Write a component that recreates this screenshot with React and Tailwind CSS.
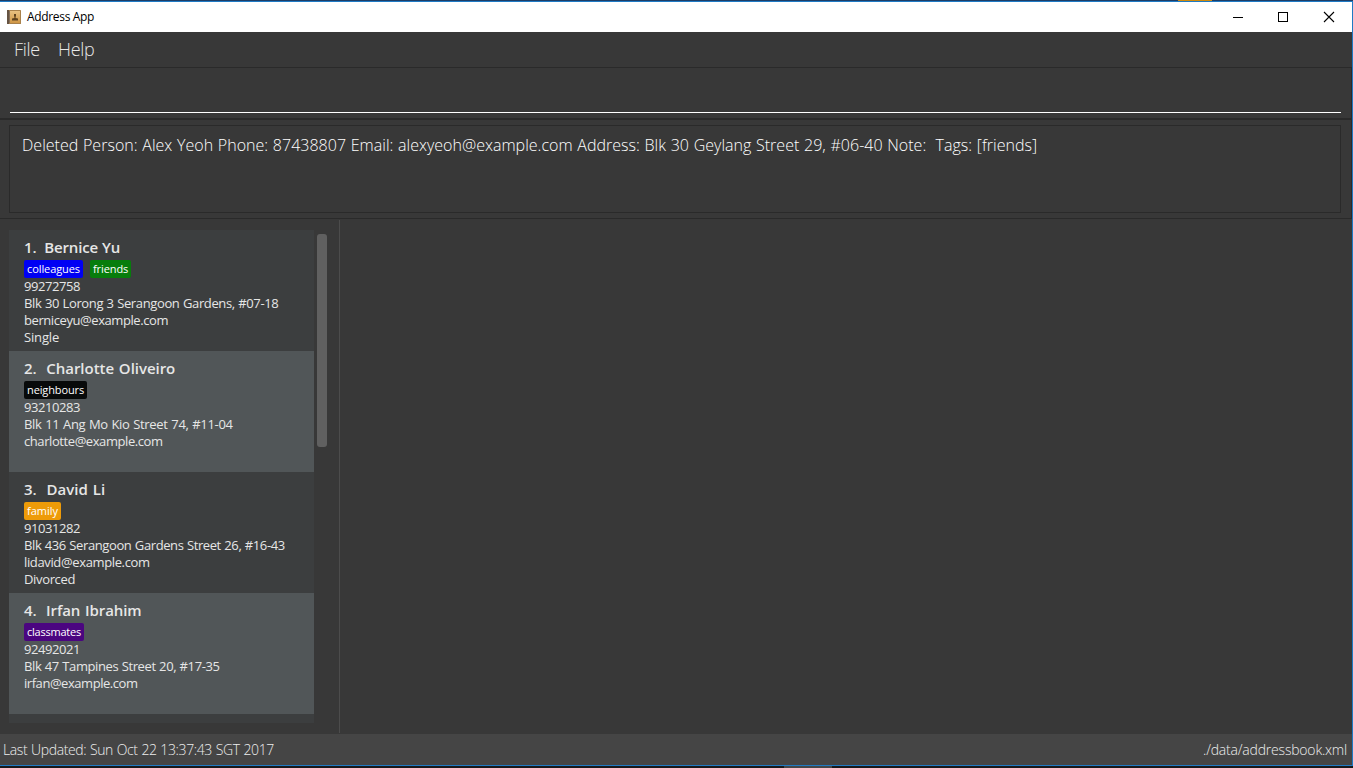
import React from "react";

const people = [
  {
    name: "1.  Bernice Yu",
    nameClass: "tracking-[-0.15px] [word-spacing:0.2px]",
    tags: [
      { label: "colleagues", className: "w-[59px] bg-[#0000f4] tracking-[-0.09px]" },
      { label: "friends", className: "w-[41px] bg-[#077d0c] tracking-[-0.1px]" },
    ],
    lines: [
      ["99272758", "tracking-[-0.43px]"],
      ["Blk 30 Lorong 3 Serangoon Gardens, #07-18", "tracking-[-0.37px] [word-spacing:0.5px]"],
      ["berniceyu@example.com", "tracking-[-0.42px]"],
      ["Single", "tracking-[-0.15px]"],
    ],
  },
  {
    name: "2.  Charlotte Oliveiro",
    nameClass: "tracking-[-0.04px] [word-spacing:1px]",
    tags: [{ label: "neighbours", className: "w-[63px] bg-[#080a0a] tracking-[-0.12px]" }],
    lines: [
      ["93210283", "tracking-[-0.43px]"],
      ["Blk 11 Ang Mo Kio Street 74, #11-04", "tracking-[-0.3px] [word-spacing:0.5px]"],
      ["charlotte@example.com", "tracking-[-0.42px]"],
    ],
  },
  {
    name: "3.  David Li",
    nameClass: "tracking-[0.02px] [word-spacing:1px]",
    tags: [{ label: "family", className: "w-[37px] bg-[#ee9b08] tracking-[0px]" }],
    lines: [
      ["91031282", "tracking-[-0.43px]"],
      ["Blk 436 Serangoon Gardens Street 26, #16-43", "tracking-[-0.4px] [word-spacing:0.5px]"],
      ["lidavid@example.com", "tracking-[-0.36px]"],
      ["Divorced", "tracking-[-0.35px]"],
    ],
  },
  {
    name: "4.  Irfan Ibrahim",
    nameClass: "tracking-[-0.1px] [word-spacing:1px]",
    tags: [{ label: "classmates", className: "w-[60px] bg-[#4b0580] tracking-[-0.23px]" }],
    lines: [
      ["92492021", "tracking-[-0.43px]"],
      ["Blk 47 Tampines Street 20, #17-35", "tracking-[-0.4px] [word-spacing:0.5px]"],
      ["irfan@example.com", "tracking-[-0.45px]"],
    ],
  },
];

function BookIcon() {
  return (
    <svg width="14" height="14" viewBox="0 0 14 14" className="block">
      <defs>
        <linearGradient id="cover" x1="0" y1="0" x2="0" y2="1">
          <stop offset="0" stopColor="#e8c182" />
          <stop offset="1" stopColor="#cf9645" />
        </linearGradient>
      </defs>
      <rect width="14" height="14" rx="0.6" fill="#a9814b" />
      <rect x="3" y="1" width="10" height="12" fill="url(#cover)" />
      <rect width="2" height="14" fill="#665443" />
      <rect x="2" y="1" width="1" height="12" fill="#85705a" />
      <path d="M7 4h2v2l-.4 1v1l2.400.6V10.500H5V8.600L7.400 8V7L7 6z" fill="#60431f" />
    </svg>
  );
}

function TitleBar() {
  return (
    <header className="flex h-[30px] shrink-0 items-center bg-white pl-[7px] text-black">
      <BookIcon />
      <span className="ml-1.5 text-[12px] leading-4 tracking-[-0.33px]">Address App</span>
      <svg className="ml-auto mr-[17px] block" width="102" height="12" viewBox="0 0 102 12" fill="none" stroke="#000" shapeRendering="crispEdges">
        <path d="M0 6.500h10" />
        <rect x="45.500" y="1.500" width="9" height="9" />
        <path d="M91 1l10 10M101 1L91 11" shapeRendering="auto" strokeWidth="1.1" />
      </svg>
    </header>
  );
}

function PersonCard({ person, shaded }) {
  return (
    <li className={`h-[121px] shrink-0 pl-[15px] pt-[7px] text-[#e6e6e6] ${shaded ? "bg-[#515658]" : "bg-[#3c3e3f]"}`}>
      <h2 className={`h-[22px] whitespace-pre text-[15px] font-semibold leading-[20px] ${person.nameClass}`}>{person.name}</h2>
      <div className="mt-[1px] flex h-[18px] gap-[7px]">
        {person.tags.map((tag) => (
          <span key={tag.label} className={`block h-[18px] rounded-[2px] pl-[3px] text-[11px] leading-[18px] text-white ${tag.className}`}>
            {tag.label}
          </span>
        ))}
      </div>
      {person.lines.map(([text, className]) => (
        <p key={text} className={`h-[17px] whitespace-nowrap text-[13px] leading-[17px] ${className}`}>{text}</p>
      ))}
    </li>
  );
}

export default function App() {
  return (
    <div className="flex h-[768px] w-[1353px] flex-col overflow-hidden bg-[#383838] font-['Open_Sans',sans-serif]">
      <div className="flex h-px shrink-0 bg-[#1d3d66] pl-[1178px]">
        <div className="h-px w-[34px] bg-[#d18b0c]" />
      </div>
      <div className="flex h-[765px] shrink-0 flex-col border-b border-r border-t border-[#1f7ac4]">
        <TitleBar />
        <nav className="flex h-[35px] shrink-0 gap-[18px] pl-[14px] text-[18px] font-light leading-[35px] text-[#e8e8e8]">
          <span className="w-[26px] tracking-[-0.3px]">File</span>
          <span className="tracking-[-0.3px]">Help</span>
        </nav>
        <div className="h-[53px] shrink-0 border-b-2 border-r border-t border-[#2a2a2a] pl-[10px] pr-[10px]">
          <div className="h-[45px] border-b border-white" />
        </div>
        <div className="h-[99px] shrink-0 border-b border-r border-[#2a2a2a] pl-[9px] pr-[10px] pt-[5px]">
          <div className="h-[88px] whitespace-pre border border-[#2a2a2a] pl-[12px] pt-[8px] text-[16px] font-light leading-[22px] tracking-[0.02px] [word-spacing:0.5px] text-white">
            {"Deleted Person: Alex Yeoh Phone: 87438807 Email: alexyeoh@example.com Address: Blk 30 Geylang Street 29, #06-40 Note:  Tags: [friends]"}
          </div>
        </div>
        <main className="flex h-[515px] shrink-0 pt-px">
          <aside className="flex w-[339px] shrink-0 pl-[9px] pt-[10px]">
            <ul className="flex h-[493px] w-[305px] flex-col overflow-hidden bg-[#3c3e3f]">
              {people.map((person, i) => (
                <PersonCard key={person.name} person={person} shaded={i % 2 === 1} />
              ))}
            </ul>
            <div className="ml-[3px] mt-[4px] h-[213px] w-[10px] rounded-[3px] bg-[#606060]" />
          </aside>
          <div className="h-[513px] w-px bg-[#4c4c4c]" />
        </main>
        <footer className="flex h-[31px] shrink-0 justify-between bg-[#454545] pl-[3px] pr-[5px] text-[14px] font-light leading-[31px] text-[#eeeeee]">
          <span className="tracking-[-0.38px] [word-spacing:0.5px]">Last Updated: Sun Oct 22 13:37:43 SGT 2017</span>
          <span className="tracking-[-0.2px]">./data/addressbook.xml</span>
        </footer>
      </div>
      <div className="flex h-[2px] shrink-0 bg-[#18191b] pl-[784px]">
        <div className="h-[2px] w-[48px] bg-[#454749]" />
      </div>
    </div>
  );
}
